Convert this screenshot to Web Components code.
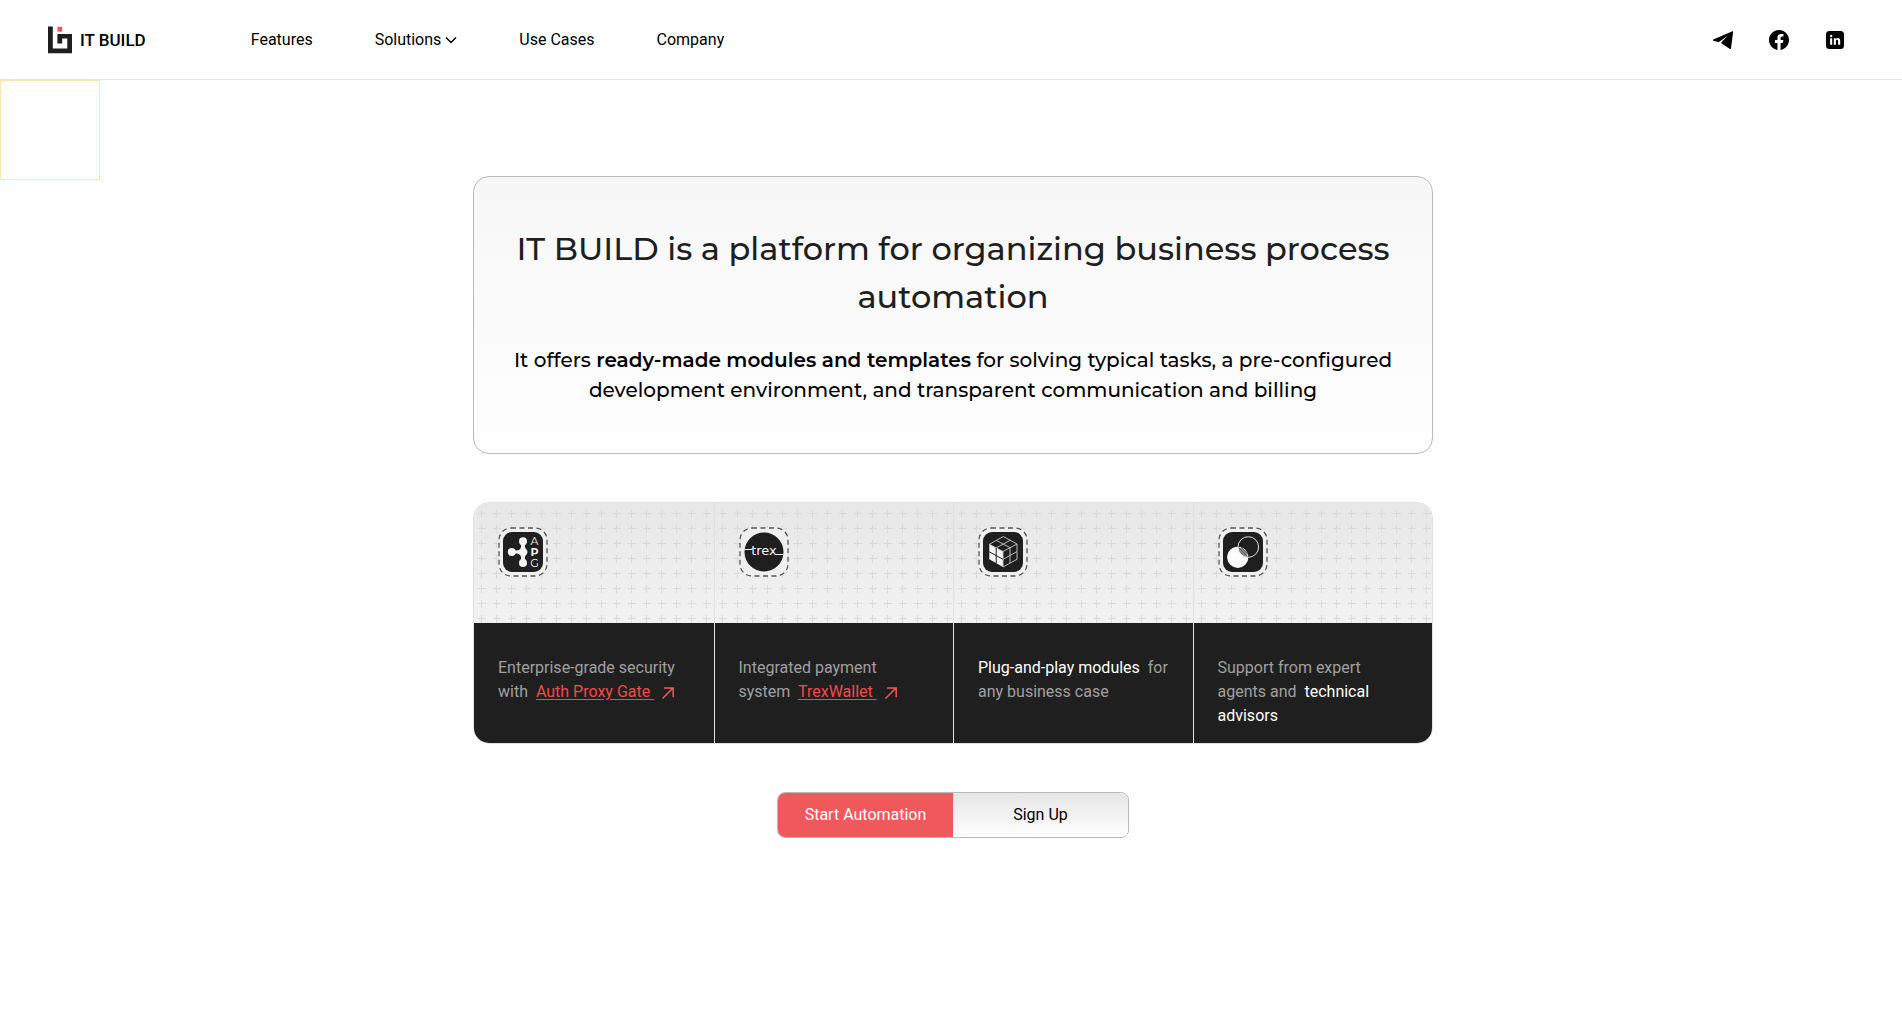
<!DOCTYPE html>
<html lang="en">
<head>
<meta charset="utf-8">
<meta name="viewport" content="width=device-width, initial-scale=1">
<title>IT BUILD</title>
<style>
  body {
    margin: 0;
    min-height: 100vh;
    background: #fefefe;
    color: #000;
    font: 16px/24px Roboto, "Liberation Sans", sans-serif;
    --ink: #1f1f1f;
    --accent: #ef595b;
    --line: #e0e0e0;
    --frame: #b9babb;
    --display: Montserrat, Inter, "Open Sans", sans-serif;
  }
</style>
</head>
<body>
<landing-page></landing-page>

<template id="landing-page">
  <style>
    :host { display: block; }
    main {
      display: flex; flex-direction: column; align-items: center; gap: 48px;
      padding: 96px 16px 48px 20px;
    }
    hero-card, feature-grid { width: 100%; max-width: 960px; }
    a { color: #f7484a; text-underline-offset: 2px; }
    strong { color: #fff; font-weight: 400; }
    .ext { width: 12px; height: 12px; fill: none; stroke: var(--accent); stroke-width: 1.5; vertical-align: -2px; }
  </style>
  <site-header></site-header>
  <corner-frame></corner-frame>
  <main>
    <hero-card></hero-card>
    <feature-grid>
      <feature-cell icon="apg">Enterprise-grade security with &nbsp;<a href="#apg">Auth Proxy Gate&nbsp;</a>&nbsp; <svg class="ext" viewBox="0 0 12 12" aria-hidden="true"><path d="M.5 11.5 11 1M2 1h9.2v9.2"/></svg></feature-cell>
      <feature-cell icon="trex">Integrated payment system&nbsp; <a href="#trex">TrexWallet&nbsp;</a>&nbsp; <svg class="ext" viewBox="0 0 12 12" aria-hidden="true"><path d="M.5 11.5 11 1M2 1h9.2v9.2"/></svg></feature-cell>
      <feature-cell icon="cube"><strong>Plug-and-play modules</strong>&nbsp; for any business case</feature-cell>
      <feature-cell icon="circles">Support from expert agents and &nbsp;<strong>technical advisors</strong></feature-cell>
    </feature-grid>
    <action-pair></action-pair>
  </main>
</template>

<template id="site-header">
  <style>
    :host { display: block; border-bottom: 1px solid #e5e5e5; }
    header { display: flex; align-items: center; height: 79px; padding: 0 55px 0 48px; }
    a { color: inherit; text-decoration: none; }
    .brand { display: flex; align-items: center; gap: 8px; font-size: 17px; font-weight: 500; }
    .brand svg { width: 24px; height: 28px; }
    nav { display: flex; align-items: center; gap: 62px; margin-left: 105px; }
    button {
      display: flex; align-items: center; gap: 4px; margin: 0; padding: 0; border: 0;
      background: none; color: inherit; font: inherit; cursor: pointer;
    }
    button svg { width: 12px; height: 8px; fill: none; stroke: #000; stroke-width: 1.5; }
    .social { display: flex; gap: 32px; margin-left: auto; }
    .social a { display: flex; }
    .social svg { width: 24px; height: 24px; }
  </style>
  <header>
    <a class="brand" href="#home">
      <svg viewBox="0 0 24 28" aria-hidden="true">
        <path fill="#1f1f1f" d="M0 .6h4.8v22h14.5V12.4h-5.1v5.2H9.4V8H24v19.2H0z"/>
        <path fill="#ef595b" d="M9.4.8h4.8v4.8H9.4z"/>
      </svg>
      <span>IT BUILD</span>
    </a>
    <nav>
      <a href="#features">Features</a>
      <button type="button">Solutions<svg viewBox="0 0 12 8" aria-hidden="true"><path d="m1 1.5 5 5 5-5"/></svg></button>
      <a href="#cases">Use Cases</a>
      <a href="#company">Company</a>
    </nav>
    <div class="social">
      <a href="#telegram" aria-label="Telegram"><svg viewBox="0 0 24 24"><path d="M2.3 11.4 20.9 3.4q1.3-.4 1.2.8L20 20.2q-.3 1.3-1.4.6l-7.9-5.3q-.9-.7-.1-1.5L17 7.6 8.3 13.7q-.5.3-1 .2l-5-1.2q-1-.6 0-1.3z"/></svg></a>
      <a href="#facebook" aria-label="Facebook"><svg viewBox="0 0 24 24"><path d="M12 2C6.480 2 2 6.480 2 12c0 4.990 3.660 9.130 8.440 9.880v-6.990H7.900V12h2.540V9.800c0-2.510 1.490-3.890 3.780-3.890 1.090 0 2.240.195 2.240.195v2.460h-1.260c-1.240 0-1.630.772-1.630 1.560V12h2.770l-.443 2.890h-2.330v6.990C18.340 21.130 22 16.990 22 12c0-5.520-4.480-10-10-10z"/></svg></a>
      <a href="#linkedin" aria-label="LinkedIn"><svg viewBox="0 0 24 24"><rect x="3" y="3" width="18" height="18" rx="3.500"/><g fill="#fff"><circle cx="8.200" cy="8" r="1.200"/><path d="M7.100 10.200h2.100v6.600H7.100zM10.800 10.200h2v.9c.4-.7 1.100-1.100 2-1.100 1.900 0 2.400 1.200 2.400 3v3.800h-2.100v-3.500c0-.9-.2-1.500-1-1.500-.9 0-1.200.7-1.200 1.500v3.500h-2.100z"/></g></svg></a>
    </div>
  </header>
</template>

<template id="corner-frame">
  <style>
    :host {
      position: absolute; left: 0; width: 100px; height: 100px;
      box-sizing: border-box; border: 1px solid #fee3b8; pointer-events: none;
    }
  </style>
</template>

<template id="hero-card">
  <style>
    :host {
      display: block; box-sizing: border-box; padding: 48px 36px; text-align: center;
      border: 1px solid var(--frame); border-radius: 16px;
      background: linear-gradient(#f7f7f7, #fefefe);
      font-family: var(--display);
    }
    h1 { margin: 0 0 24px; color: var(--ink); font-size: 32px; line-height: 48px; font-weight: 500; }
    p { margin: 0; font-size: 20px; line-height: 30px; font-weight: 500; }
    strong { font-weight: 600; }
  </style>
  <h1>IT BUILD is a platform for organizing business process automation</h1>
  <p>It offers <strong>ready-made modules and templates</strong> for solving typical tasks, a pre-configured development environment, and transparent communication and billing</p>
</template>

<template id="feature-grid">
  <style>
    :host {
      display: grid; grid-template-columns: repeat(4, minmax(0, 1fr)); box-sizing: border-box;
      border: 1px solid var(--line); border-radius: 16px; overflow: hidden;
    }
    ::slotted(:not(:first-child)) { border-left: 1px solid var(--line); }
  </style>
  <slot></slot>
</template>

<template id="feature-cell">
  <style>
    :host { display: flex; flex-direction: column; color: #a0a0a0; }
    .top { position: relative; height: 120px; box-sizing: border-box; padding: 24px; background: linear-gradient(#e7e7e7, #f2f2f2); }
    .grid { position: absolute; inset: 0; width: 100%; height: 100%; }
    .badge { position: relative; display: block; width: 50px; height: 50px; }
    .body { flex: 1; box-sizing: border-box; min-height: 120px; padding: 33px 24px 15px; background: var(--ink); }
    .badge svg { display: block; width: 50px; height: 50px; }
  </style>
  <div class="top">
    <svg class="grid" aria-hidden="true">
      <defs><pattern id="plus" width="15" height="15" y="3" patternUnits="userSpaceOnUse"><path d="M4 7.500h8M7.500 4v8" stroke="#dadada"/></pattern></defs>
      <rect width="100%" height="100%" fill="url(#plus)"/>
    </svg>
    <div class="badge"></div>
  </div>
  <div class="body"><slot></slot></div>
</template>

<template id="action-pair">
  <style>
    :host {
      display: grid; grid-template-columns: 175px 175px; overflow: hidden;
      border: 1px solid var(--frame); border-radius: 8px;
    }
    button { height: 44px; margin: 0; padding: 0; border: 0; color: #000; font: inherit; cursor: pointer; }
    .primary { background: var(--accent); color: #fff; }
    .secondary { background: linear-gradient(#e6e6e6, #fefefe); }
  </style>
  <button class="primary" type="button">Start Automation</button>
  <button class="secondary" type="button">Sign Up</button>
</template>

<script>
  const stamp = (host) => {
    const root = host.attachShadow({ mode: "open" });
    root.append(document.getElementById(host.localName).content.cloneNode(true));
    return root;
  };

  const tile = '<rect x="5" y="5" width="40" height="40" rx="9" fill="#1f1f1f"/>';
  const icons = {
    apg: tile + `
      <g fill="#f4f4f4">
        <circle cx="25" cy="14.300" r="4"/><circle cx="13.700" cy="25" r="4"/><circle cx="25" cy="36" r="4"/>
        <path d="M22 16.500q1.500 1.500 1 3.500-.5 3-4 3.500-2.500.3-4-1v5q1.500-1.300 4-1 3.500.5 4 3.500.5 2-1 3.500h6q-1.500-1.500-1-3.500.2-1.300 1.500-2.500 1-1.200 1-2.500t-1-2.500q-1.300-1.200-1.500-2.500-.5-2 1-3.500z"/>
      </g>
      <g fill="#f4f4f4" font-family="Montserrat, Inter, sans-serif" font-size="11" text-anchor="middle">
        <text x="36.500" y="18">A</text><text x="36.500" y="29" font-weight="700">P</text><text x="36.500" y="40">G</text>
      </g>`,
    trex: `
      <circle cx="25" cy="25" r="19.500" fill="#1f1f1f"/>
      <text x="25" y="28" font-family="DejaVu Sans, sans-serif" font-size="13" fill="#f4f4f4" text-anchor="middle">trex</text>
      <path d="M5.500 22.500H13M37 27.500h7.500" stroke="#f4f4f4" stroke-width="1"/>`,
    cube: tile + `
      <path d="M11.300 17.300 25 24.500V40l-13.700-7.700z" fill="#f4f4f4"/>
      <g fill="none" stroke="#c9c9c9" stroke-width=".9" stroke-linejoin="round">
        <path d="M25.300 9.500 39 17v15.300L25 40V24.500L11.300 17.300zM25 24.500 39 17M18.300 13.400 32 20.700V36M32.200 13.300 18.200 20.900M25 32.300l14-7.700"/>
      </g>
      <path d="M18.200 20.900v15.300M11.300 24.800 25 32.300" stroke="#1f1f1f" stroke-width="1" fill="none"/>`,
    circles: tile + `
      <clipPath id="lens"><circle cx="30.300" cy="20" r="10.500"/></clipPath>
      <circle cx="19.800" cy="30.300" r="10.600" fill="#fff"/>
      <g clip-path="url(#lens)">
        <circle cx="19.800" cy="30.300" r="10" fill="#8a8a8a"/>
        <path d="m19 19 14 14M22 19l12 12M17 20l14 14" stroke="#444" stroke-width=".7"/>
      </g>
      <circle cx="30.300" cy="20" r="10.300" fill="none" stroke="#f4f4f4" stroke-width=".9"/>`
  };

  for (const name of ["site-header", "corner-frame", "hero-card", "feature-grid", "action-pair"]) {
    customElements.define(name, class extends HTMLElement {
      constructor() { super(); stamp(this); }
    });
  }

  customElements.define("feature-cell", class extends HTMLElement {
    connectedCallback() {
      if (this.shadowRoot) return;
      stamp(this).querySelector(".badge").innerHTML =
        `<svg viewBox="0 0 50 50" aria-hidden="true">
          <rect x="1" y="1" width="48" height="48" rx="12" fill="#efefef" stroke="#555" stroke-width="1.300" stroke-dasharray="5 3.500"/>
          ${icons[this.getAttribute("icon")]}
        </svg>`;
    }
  });

  customElements.define("landing-page", class extends HTMLElement {
    constructor() { super(); stamp(this); }
  });
</script>
</body>
</html>
